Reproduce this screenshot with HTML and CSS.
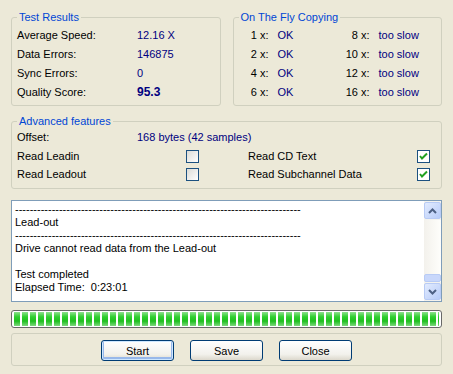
FILE: index.html
```html
<!DOCTYPE html>
<html lang="en">
<head>
    <meta charset="UTF-8">
    <title>Test Results</title>
    <link rel="stylesheet" href="styles.css">
</head>
<body>
    <div class="top-row">
        <fieldset class="group">
            <legend>Test Results</legend>
            <div class="row"><span class="label">Average Speed:</span><span class="value">12.16 X</span></div>
            <div class="row"><span class="label">Data Errors:</span><span class="value">146875</span></div>
            <div class="row"><span class="label">Sync Errors:</span><span class="value">0</span></div>
            <div class="row"><span class="label">Quality Score:</span><span class="value score">95.3</span></div>
        </fieldset>
        <fieldset class="group">
            <legend>On The Fly Copying</legend>
            <div class="speeds">
                <span class="num">1 x:</span><span class="value">OK</span><span class="num">8 x:</span><span class="value">too slow</span>
                <span class="num">2 x:</span><span class="value">OK</span><span class="num">10 x:</span><span class="value">too slow</span>
                <span class="num">4 x:</span><span class="value">OK</span><span class="num">12 x:</span><span class="value">too slow</span>
                <span class="num">6 x:</span><span class="value">OK</span><span class="num">16 x:</span><span class="value">too slow</span>
            </div>
        </fieldset>
    </div>

    <fieldset class="group advanced">
        <legend>Advanced features</legend>
        <div class="row"><span class="label">Offset:</span><span class="value">168 bytes (42 samples)</span></div>
        <div class="options">
            <span>Read Leadin</span><span class="check"></span>
            <span>Read CD Text</span><span class="check on"><svg width="11" height="11" viewBox="0 0 11 11"><path d="M2 5 L4 7.5 L9 2.5" fill="none" stroke="#21a121" stroke-width="2"/></svg></span>
            <span>Read Leadout</span><span class="check"></span>
            <span>Read Subchannel Data</span><span class="check on"><svg width="11" height="11" viewBox="0 0 11 11"><path d="M2 5 L4 7.5 L9 2.5" fill="none" stroke="#21a121" stroke-width="2"/></svg></span>
        </div>
    </fieldset>

    <div class="log">
        <div class="log-text">
            <div>------------------------------------------------------------------------------</div>
            <div>Lead-out</div>
            <div>------------------------------------------------------------------------------</div>
            <div>Drive cannot read data from the Lead-out</div>
            <div>&nbsp;</div>
            <div>Test completed</div>
            <div>Elapsed Time:&nbsp; 0:23:01</div>
        </div>
        <div class="scrollbar">
            <div class="sb-btn"><svg width="9" height="6" viewBox="0 0 9 6"><path d="M1 5 L4.5 1.5 L8 5" fill="none" stroke="#4d6185" stroke-width="2"/></svg></div>
            <div class="sb-track"><div class="sb-thumb"></div></div>
            <div class="sb-btn"><svg width="9" height="6" viewBox="0 0 9 6"><path d="M1 1 L4.5 4.5 L8 1" fill="none" stroke="#4d6185" stroke-width="2"/></svg></div>
        </div>
    </div>

    <div class="progress"><div class="progress-fill"></div></div>

    <fieldset class="group buttons">
        <button class="btn default">Start</button>
        <button class="btn">Save</button>
        <button class="btn">Close</button>
    </fieldset>
</body>
</html>
```

FILE: styles.css
```css
body {
    margin: 0;
    padding: 11px 11px 0;
    background-color: #ece9d8;
    font-family: 'Liberation Sans', Arial, sans-serif;
    font-size: 11px;
    color: #000;
}

.top-row {
    display: flex;
    gap: 12px;
}

.group {
    flex: 1;
    min-width: 0;
    margin: 0;
    padding: 2px 5px 3px;
    border: 1px solid #d0d0bf;
    border-radius: 3px;
}

.group legend {
    padding: 0 2px;
    line-height: 13px;
    color: #0046d5;
}

.row {
    display: flex;
    height: 19px;
    line-height: 19px;
}

.label {
    width: 120px;
}

.value {
    color: #000080;
}

.score {
    font-weight: bold;
    font-size: 12px;
}

.speeds {
    display: grid;
    grid-template-columns: 30px 53px 30px auto;
    column-gap: 9px;
    grid-auto-rows: 19px;
    line-height: 19px;
}

.num {
    text-align: right;
}

.advanced {
    margin-top: 9px;
    padding-top: 0;
    padding-bottom: 5px;
}

.options {
    display: grid;
    grid-template-columns: 169px 62px 169px 13px;
    grid-auto-rows: 18px;
    line-height: 18px;
    align-items: center;
}

.check {
    width: 11px;
    height: 11px;
    border: 1px solid #1c5180;
    background: linear-gradient(135deg, #dcdcd7, #fff);
    display: flex;
    align-items: center;
    justify-content: center;
}

.check.on {
    background: #fff;
}

.log {
    margin-top: 11px;
    height: 100px;
    border: 1px solid #7f9db9;
    background-color: #fff;
    display: flex;
}

.log-text {
    flex: 1;
    padding: 2px 3px;
    line-height: 13px;
    white-space: nowrap;
    overflow: hidden;
}

.scrollbar {
    width: 17px;
    display: flex;
    flex-direction: column;
    background-color: #f4f3ee;
}

.sb-btn {
    height: 15px;
    margin: 1px 0;
    border: 1px solid #b8cbf5;
    border-radius: 2px;
    background: linear-gradient(135deg, #e2ebfe, #b7ccf9);
    display: flex;
    align-items: center;
    justify-content: center;
}

.sb-track {
    flex: 1;
    display: flex;
    flex-direction: column;
    justify-content: flex-end;
    background: linear-gradient(90deg, #f3f1ec, #fefefb);
}

.sb-thumb {
    height: 6px;
    border: 1px solid #b8cbf5;
    border-radius: 2px;
    background: #c8d7fb;
}

.progress {
    margin-top: 8px;
    height: 14px;
    padding: 1px 2px;
    border: 1px solid #686868;
    border-radius: 3px;
    background-color: #fff;
}

.progress-fill {
    height: 100%;
    background:
        repeating-linear-gradient(90deg, transparent 0 6px, #fff 6px 8px),
        linear-gradient(#8ee08e, #2ecf2e 35%, #1fbf1f 65%, #7ed87e);
}

.buttons {
    margin-top: 5px;
    padding: 6px 0 4px;
    display: flex;
    justify-content: center;
    gap: 16px;
}

.btn {
    width: 73px;
    height: 21px;
    padding: 0;
    border: 1px solid #003c74;
    border-radius: 3px;
    background: linear-gradient(#fff, #f2f1ec 70%, #dcd8cc);
    font-family: 'Liberation Sans', Arial, sans-serif;
    font-size: 11px;
    color: #000;
}

.btn.default {
    box-shadow: inset 0 0 0 1px #cee7ff, inset 0 -1px 0 2px #98b8ea;
}
```
